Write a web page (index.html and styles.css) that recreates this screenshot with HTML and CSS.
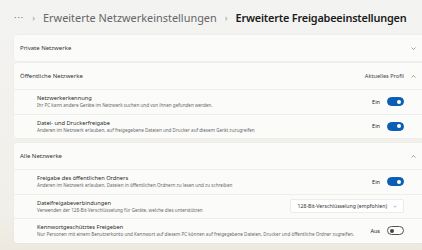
FILE: index.html
```html
<!DOCTYPE html>
<html lang="de">
<head>
  <meta charset="UTF-8">
  <meta name="viewport" content="width=device-width, initial-scale=1.0">
  <title>Erweiterte Freigabeeinstellungen</title>
  <link rel="stylesheet" href="styles.css">
</head>
<body>
  <div class="crumbs">
    <span class="more">&middot;&middot;&middot;</span>
    <span class="sep">&rsaquo;</span>
    <span class="parent">Erweiterte Netzwerkeinstellungen</span>
    <span class="sep">&rsaquo;</span>
    <span class="current">Erweiterte Freigabeeinstellungen</span>
  </div>

  <div class="groups">
    <!-- Private Netzwerke (zugeklappt) -->
    <div class="card">
      <div class="head">
        <span class="head-title">Private Netzwerke</span>
        <svg class="chev" viewBox="0 0 10 6"><polyline points="1,1 5,5 9,1"/></svg>
      </div>
    </div>

    <!-- Öffentliche Netzwerke -->
    <div class="card">
      <div class="head">
        <span class="head-title">Öffentliche Netzwerke</span>
        <span class="head-note">Aktuelles Profil</span>
        <svg class="chev" viewBox="0 0 10 6"><polyline points="1,5 5,1 9,5"/></svg>
      </div>
      <div class="row">
        <div class="text">
          <div class="title">Netzwerkerkennung</div>
          <div class="desc">Ihr PC kann andere Geräte im Netzwerk suchen und von ihnen gefunden werden.</div>
        </div>
        <span class="state">Ein</span>
        <span class="toggle on"></span>
      </div>
      <div class="row">
        <div class="text">
          <div class="title">Datei- und Druckerfreigabe</div>
          <div class="desc">Anderen im Netzwerk erlauben, auf freigegebene Dateien und Drucker auf diesem Gerät zuzugreifen</div>
        </div>
        <span class="state">Ein</span>
        <span class="toggle on"></span>
      </div>
    </div>

    <!-- Alle Netzwerke -->
    <div class="card gap">
      <div class="head">
        <span class="head-title">Alle Netzwerke</span>
        <svg class="chev" viewBox="0 0 10 6"><polyline points="1,5 5,1 9,5"/></svg>
      </div>
      <div class="row">
        <div class="text">
          <div class="title">Freigabe des öffentlichen Ordners</div>
          <div class="desc">Anderen im Netzwerk erlauben, Dateien in öffentlichen Ordnern zu lesen und zu schreiben</div>
        </div>
        <span class="state">Ein</span>
        <span class="toggle on"></span>
      </div>
      <div class="row">
        <div class="text">
          <div class="title">Dateifreigabeverbindungen</div>
          <div class="desc">Verwenden der 128-Bit-Verschlüsselung für Geräte, welche dies unterstützen</div>
        </div>
        <div class="select">
          <span>128-Bit-Verschlüsselung (empfohlen)</span>
          <svg class="chev small" viewBox="0 0 10 6"><polyline points="1,1 5,5 9,1"/></svg>
        </div>
      </div>
      <div class="row">
        <div class="text">
          <div class="title">Kennwortgeschütztes Freigeben</div>
          <div class="desc">Nur Personen mit einem Benutzerkonto und Kennwort auf diesem PC können auf freigegebene Dateien, Drucker und öffentliche Ordner zugreifen.</div>
        </div>
        <span class="state">Aus</span>
        <span class="toggle"></span>
      </div>
    </div>
  </div>
</body>
</html>
```

FILE: styles.css
```css
body {
  margin: 0;
  font-family: "Segoe UI", "Noto Sans", sans-serif;
  color: #1b1b1b;
  background: linear-gradient(#f3f3f2, #f1efe9 85%, #ede9e0);
  height: 250px;
  overflow: hidden;
}

/* Breadcrumb */
.crumbs {
  display: flex;
  align-items: center;
  gap: 6px;
  height: 35px;
  padding-left: 14px;
  font-size: 10.9px;
  white-space: nowrap;
}

.more {
  color: #777;
  font-size: 9px;
  letter-spacing: 1px;
}

.sep {
  color: #999;
  font-size: 9px;
  margin: 0 2px;
}

.parent {
  color: #666;
}

.current {
  font-weight: 600;
  letter-spacing: -0.2px;
}

/* Cards */
.groups {
  display: flex;
  flex-direction: column;
  gap: 2px;
  padding-left: 14px;
}

.card {
  background-color: #fbfbfa;
  margin-right: -8px;
  border-radius: 3px 0 0 3px;
  box-shadow: 0 0 0 0.5px rgba(0, 0, 0, 0.03);
}

.card.gap {
  margin-top: 3px;
}

.head {
  display: flex;
  align-items: center;
  height: 26px;
  padding: 0 14px 0 6px;
  font-size: 6px;
  color: #333;
}

.head-title {
  flex: 1;
}

.head-note {
  color: #444;
  margin-right: 7px;
  font-size: 5.6px;
}

.chev {
  width: 5px;
  height: 3px;
  fill: none;
  stroke: #666;
  stroke-width: 1.2;
}

.chev.small {
  width: 4px;
  margin-left: 6px;
}

.row {
  display: flex;
  align-items: center;
  height: 23.5px;
  padding: 0 26px 0 23px;
  border-top: 1px solid #eeeeeb;
}

.text {
  flex: 1;
  min-width: 0;
}

.title {
  font-size: 5.7px;
  line-height: 7px;
  color: #2a2a2a;
}

.desc {
  font-size: 4.6px;
  line-height: 6px;
  color: #6a6a6a;
  white-space: nowrap;
}

.state {
  font-size: 5.5px;
  margin: 0 7px 0 10px;
}

/* Toggle switch */
.toggle {
  position: relative;
  width: 15px;
  height: 7px;
  border-radius: 5px;
  border: 1px solid #555;
  background-color: #fbfbfa;
}

.toggle::after {
  content: "";
  position: absolute;
  top: 1.5px;
  left: 2px;
  width: 4px;
  height: 4px;
  border-radius: 50%;
  background-color: #444;
}

.toggle.on {
  background-color: #0a5fb5;
  border-color: #0a5fb5;
}

.toggle.on::after {
  left: auto;
  right: 2px;
  background-color: #fff;
}

/* Dropdown */
.select {
  display: flex;
  align-items: center;
  height: 12px;
  padding: 0 6px 0 7px;
  margin-left: 10px;
  font-size: 5.2px;
  color: #333;
  background-color: #fff;
  border: 1px solid #ececea;
  border-radius: 2px;
  white-space: nowrap;
}
```
